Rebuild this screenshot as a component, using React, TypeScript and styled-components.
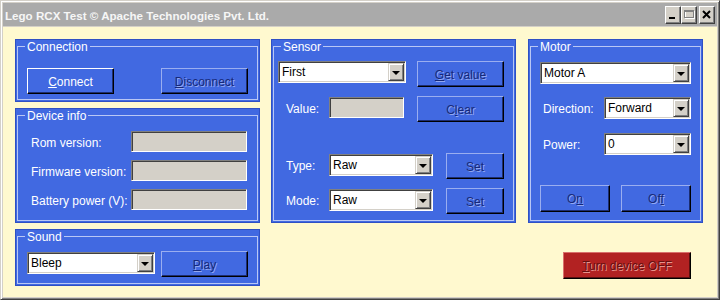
import React from "react";
import styled, { createGlobalStyle } from "styled-components";

const Global = createGlobalStyle`
  html, body { margin: 0; padding: 0; background: #d4d0c8; }
  body { font-family: "Liberation Sans", Arial, sans-serif; font-size: 12px; }
  * { box-sizing: border-box; }
`;

const Window = styled.div`
  width: 720px;
  height: 300px;
  display: flex;
  flex-direction: column;
  background: #d4d0c8;
  border: 1px solid;
  border-color: #d4d0c8 #404040 #404040 #d4d0c8;
  box-shadow: inset 1px 1px 0 #ffffff, inset -1px -1px 0 #808080;
  padding: 2px;
`;

const TitleBar = styled.div`
  height: 23px;
  flex: none;
  display: flex;
  align-items: center;
  background: #aaaaaa;
  padding: 0 2px 0 2px;
  margin-bottom: 1px;
`;

const TitleText = styled.div`
  flex: 1;
  color: #f6f6f6;
  font-weight: bold;
  font-size: 11.6px;
  white-space: nowrap;
  padding-top: 1px;
`;

const CapGroup = styled.div`
  display: flex;
  gap: 2px;
`;

const CapPair = styled.div`
  display: flex;
`;

const CapBtn = styled.div`
  width: 16px;
  height: 18px;
  background: #d4d0c8;
  border: 1px solid;
  border-color: #ffffff #404040 #404040 #ffffff;
  box-shadow: inset -1px -1px 0 #808080;
  display: flex;
  align-items: center;
  justify-content: center;
`;

const Client = styled.div`
  flex: 1;
  background: #fff9cf;
  display: flex;
  align-items: flex-start;
  padding: 12px 0 0 12px;
`;

const Column = styled.div<{ $w: number; $mr?: number }>`
  width: ${(p) => p.$w}px;
  margin-right: ${(p) => p.$mr ?? 0}px;
  display: flex;
  flex-direction: column;
  gap: 6px;
`;

const GroupFrame = styled.div<{ $h: number }>`
  height: ${(p) => p.$h}px;
  background: #4169e1;
  border: 1px solid #2f50c4;
  display: flex;
  padding: 0 1px 1px;
`;

const Fieldset = styled.fieldset`
  flex: 1;
  margin: 0;
  padding: 0;
  min-width: 0;
  border: 1px solid #b9c7f5;
`;

const Legend = styled.legend`
  margin-left: 7px;
  padding: 0 2px;
  color: #ffffff;
  font-size: 12px;
  line-height: 13px;
`;

const LegendText = styled.span`
  position: relative;
  top: 1px;
`;

const ConnBody = styled.div`
  padding: 15px 9px 0 9px;
  display: flex;
  justify-content: space-between;
`;

const InfoBody = styled.div`
  padding: 9px 10px 0 13px;
  display: grid;
  grid-template-columns: 1fr 116px;
  grid-auto-rows: 21px;
  row-gap: 8px;
  align-items: center;
`;

const SoundBody = styled.div`
  padding: 8px 9px 0 9px;
  display: flex;
  justify-content: space-between;
  align-items: flex-start;
`;

const Stack = styled.div<{ $pt: number; $pl: number; $pr: number }>`
  padding: ${(p) => p.$pt}px ${(p) => p.$pr}px 0 ${(p) => p.$pl}px;
  display: flex;
  flex-direction: column;
`;

const Row = styled.div<{ $mt?: number; $between?: boolean }>`
  display: flex;
  align-items: flex-start;
  justify-content: ${(p) => (p.$between ? "space-between" : "flex-start")};
  margin-top: ${(p) => p.$mt ?? 0}px;
`;

const Label = styled.div<{ $w?: number; $pl?: number; $mt?: number }>`
  color: #ffffff;
  font-size: 12px;
  height: 22px;
  margin-top: ${(p) => p.$mt ?? 2}px;
  display: flex;
  align-items: center;
  padding-left: ${(p) => p.$pl ?? 0}px;
  width: ${(p) => (p.$w ? `${p.$w}px` : "auto")};
  white-space: nowrap;
`;

const InfoLabel = styled.div`
  color: #ffffff;
  font-size: 12px;
  padding-top: 3px;
  white-space: nowrap;
`;

const Sunken = styled.div<{ $w: number; $h: number; $bg: string; $mt?: number; $ml?: number }>`
  width: ${(p) => p.$w}px;
  height: ${(p) => p.$h}px;
  margin-top: ${(p) => p.$mt ?? 0}px;
  margin-left: ${(p) => p.$ml ?? 0}px;
  background: ${(p) => p.$bg};
  border: 1px solid;
  border-color: #808080 #ffffff #ffffff #808080;
  box-shadow: inset 1px 1px 0 #404040, inset -1px -1px 0 #d4d0c8;
  padding: 1px;
  display: flex;
`;

const ComboText = styled.div`
  flex: 1;
  color: #000000;
  font-size: 12px;
  line-height: 19px;
  padding-left: 2px;
  white-space: nowrap;
  overflow: hidden;
`;

const DropBtn = styled.div`
  width: 16px;
  height: 18px;
  flex: none;
  background: #d4d0c8;
  border: 1px solid;
  border-color: #d4d0c8 #404040 #404040 #d4d0c8;
  box-shadow: inset 1px 1px 0 #ffffff, inset -1px -1px 0 #808080;
  display: flex;
  align-items: center;
  justify-content: center;
`;

const Arrow = styled.div`
  width: 0;
  height: 0;
  border-left: 4px solid transparent;
  border-right: 4px solid transparent;
  border-top: 4px solid #000000;
  margin-top: 1px;
`;

const Btn = styled.button<{ $w: number; $h?: number; $tone?: "blue" | "red"; $active?: boolean }>`
  width: ${(p) => p.$w}px;
  height: ${(p) => p.$h ?? 26}px;
  margin: 0;
  padding: 1px 0 0;
  flex: none;
  font-family: "Liberation Sans", Arial, sans-serif;
  font-size: 12px;
  background: ${(p) => (p.$tone === "red" ? "#b22222" : "#4169e1")};
  border: 1px solid;
  border-color: ${(p) =>
    p.$active
      ? "#ffffff #000000 #000000 #ffffff"
      : p.$tone === "red"
      ? "#d9706b #000000 #000000 #d9706b"
      : "#9aaef0 #000000 #000000 #9aaef0"};
  box-shadow: inset -1px -1px 0 ${(p) => (p.$tone === "red" ? "#5a1010" : "#1c2d70")};
  color: ${(p) => (p.$active ? "#ffffff" : p.$tone === "red" ? "#661010" : "#17297a")};
  text-shadow: ${(p) =>
    p.$active ? "none" : p.$tone === "red" ? "1px 1px 0 #e8928c" : "1px 1px 0 #93a8f0"};
`;

const RightCol = styled.div`
  width: 175px;
  display: flex;
  flex-direction: column;
`;

const OffBtnWrap = styled.div`
  display: flex;
  justify-content: flex-end;
  margin-top: 29px;
  padding-right: 12px;
`;

const Combo: React.FC<{ w: number; value: string; mt?: number; ml?: number }> = ({ w, value, mt, ml }) => (
  <Sunken $w={w} $h={22} $bg="#ffffff" $mt={mt} $ml={ml}>
    <ComboText>{value}</ComboText>
    <DropBtn>
      <Arrow />
    </DropBtn>
  </Sunken>
);

const Group: React.FC<{ title: string; h: number; children: React.ReactNode }> = ({ title, h, children }) => (
  <GroupFrame $h={h}>
    <Fieldset>
      <Legend>
        <LegendText>{title}</LegendText>
      </Legend>
      {children}
    </Fieldset>
  </GroupFrame>
);

export default function App() {
  return (
    <>
      <Global />
      <Window>
        <TitleBar>
          <TitleText>Lego RCX Test © Apache Technologies Pvt. Ltd.</TitleText>
          <CapGroup>
            <CapPair>
              <CapBtn>
                <svg width="14" height="16" viewBox="0 0 14 16">
                  <rect x="3" y="10" width="6" height="2" fill="#000" />
                </svg>
              </CapBtn>
              <CapBtn>
                <svg width="14" height="16" viewBox="0 0 14 16">
                  <rect x="3.5" y="4.5" width="9" height="7" fill="none" stroke="#fff" />
                  <rect x="2.5" y="3.5" width="9" height="7" fill="none" stroke="#808080" />
                  <rect x="2" y="4" width="10" height="1" fill="#808080" />
                </svg>
              </CapBtn>
            </CapPair>
            <CapBtn>
              <svg width="14" height="16" viewBox="0 0 14 16">
                <path d="M3 4 L10 11 M10 4 L3 11" stroke="#000" strokeWidth="2" />
              </svg>
            </CapBtn>
          </CapGroup>
        </TitleBar>
        <Client>
          <Column $w={245} $mr={11}>
            <Group title="Connection" h={63}>
              <ConnBody>
                <Btn $w={87} $active>
                  <u>C</u>onnect
                </Btn>
                <Btn $w={87}>
                  <u>D</u>isconnect
                </Btn>
              </ConnBody>
            </Group>
            <Group title="Device info" h={115}>
              <InfoBody>
                <InfoLabel>Rom version:</InfoLabel>
                <Sunken $w={116} $h={21} $bg="#d4d0c8" />
                <InfoLabel>Firmware version:</InfoLabel>
                <Sunken $w={116} $h={21} $bg="#d4d0c8" />
                <InfoLabel>Battery power (V):</InfoLabel>
                <Sunken $w={116} $h={21} $bg="#d4d0c8" />
              </InfoBody>
            </Group>
            <Group title="Sound" h={57}>
              <SoundBody>
                <Combo w={128} value="Bleep" mt={1} />
                <Btn $w={87}>
                  <u>P</u>lay
                </Btn>
              </SoundBody>
            </Group>
          </Column>
          <Column $w={245} $mr={12}>
            <Group title="Sensor" h={184}>
              <Stack $pt={8} $pl={0} $pr={9}>
                <Row>
                  <Combo w={128} value="First" ml={4} />
                  <Btn $w={87} style={{ marginLeft: "auto" }}>
                    <u>G</u>et value
                  </Btn>
                </Row>
                <Row $mt={9}>
                  <Label $w={55} $pl={12}>Value:</Label>
                  <Sunken $w={75} $h={21} $bg="#d4d0c8" $mt={1} />
                  <Btn $w={87} style={{ marginLeft: "auto" }}>
                    C<u>l</u>ear
                  </Btn>
                </Row>
                <Row $mt={31}>
                  <Label $w={55} $pl={12}>Type:</Label>
                  <Combo w={104} value="Raw" mt={1} />
                  <Btn $w={58} style={{ marginLeft: "auto" }}>
                    Set
                  </Btn>
                </Row>
                <Row $mt={9}>
                  <Label $w={55} $pl={12}>Mode:</Label>
                  <Combo w={104} value="Raw" mt={1} />
                  <Btn $w={58} style={{ marginLeft: "auto" }}>
                    Set
                  </Btn>
                </Row>
              </Stack>
            </Group>
          </Column>
          <RightCol>
            <Group title="Motor" h={184}>
              <Stack $pt={9} $pl={9} $pr={9}>
                <Row>
                  <Combo w={151} value="Motor A" />
                </Row>
                <Row $mt={13} $between>
                  <Label $pl={3} $mt={1}>Direction:</Label>
                  <Combo w={87} value="Forward" />
                </Row>
                <Row $mt={13} $between>
                  <Label $pl={3} $mt={1}>Power:</Label>
                  <Combo w={87} value="0" />
                </Row>
                <Row $mt={29} $between>
                  <Btn $w={70} $h={27}>
                    O<u>n</u>
                  </Btn>
                  <Btn $w={70} $h={27}>
                    Of<u>f</u>
                  </Btn>
                </Row>
              </Stack>
            </Group>
            <OffBtnWrap>
              <Btn $w={128} $h={27} $tone="red">
                <u>T</u>urn device OFF
              </Btn>
            </OffBtnWrap>
          </RightCol>
        </Client>
      </Window>
    </>
  );
}
